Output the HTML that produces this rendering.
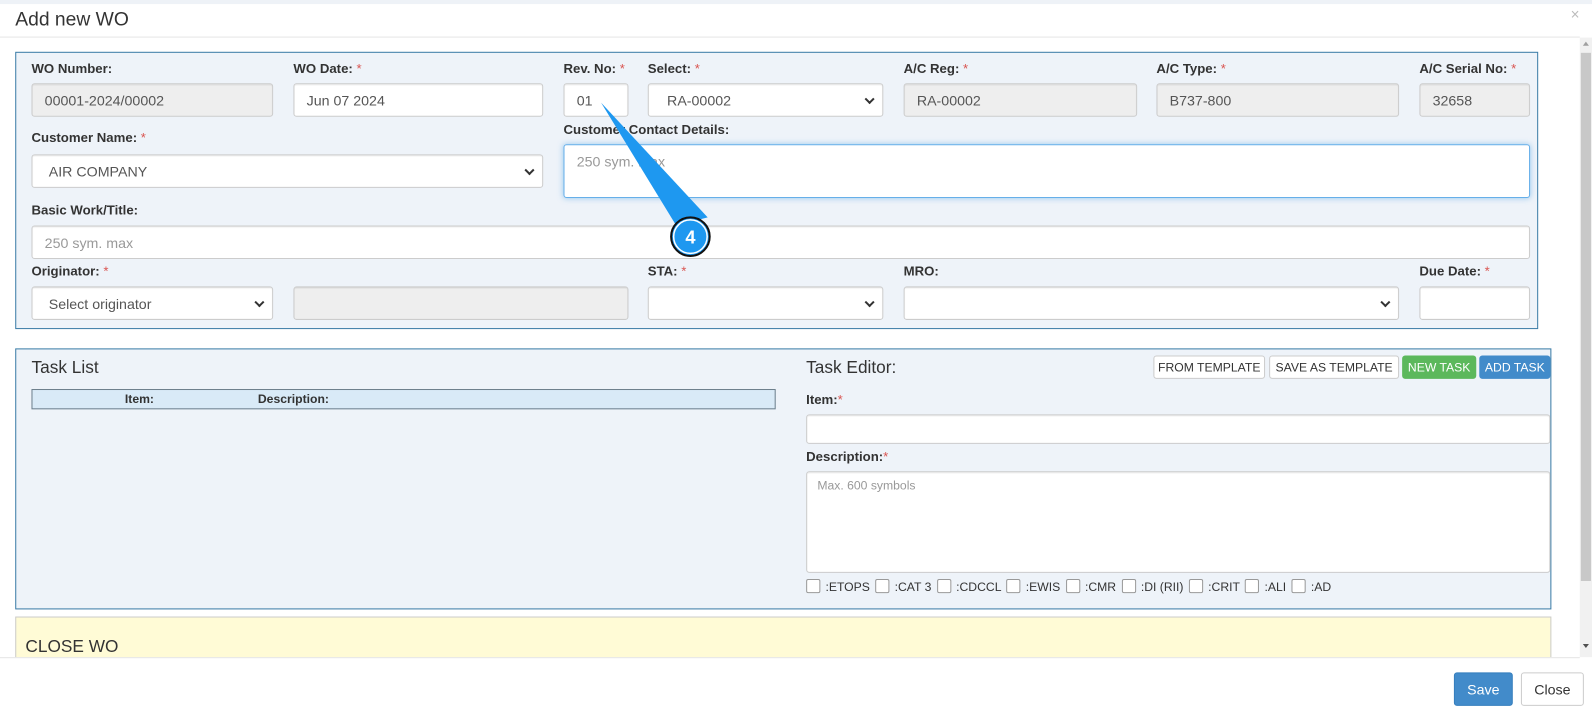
<!DOCTYPE html>
<html><head><meta charset="utf-8">
<style>
html,body{margin:0;padding:0;width:1592px;height:713px;overflow:hidden;background:#fff;font-family:"Liberation Sans",Arial,sans-serif;color:#333}
#w{position:absolute;left:0;top:0;width:1568px;height:702px;transform-origin:0 0;transform:scale(1.0153,1.0157)}
.a{position:absolute;box-sizing:border-box}
.lb{position:absolute;font-size:13px;font-weight:bold;color:#333;white-space:nowrap}
.lb i{color:#d9534f;font-style:normal;font-weight:normal}
.in{position:absolute;box-sizing:border-box;background:#fff;border:1px solid #ccc;border-radius:3px;font-size:14px;color:#555;padding:0 12px;display:flex;align-items:center;box-shadow:inset 0 1px 1px rgba(0,0,0,.075)}
.g{background:#eee}
.sel::after{content:"";position:absolute;right:9px;top:50%;width:5px;height:5px;border-right:2px solid #333;border-bottom:2px solid #333;transform:translateY(-70%) rotate(45deg)}
.sel{padding-left:16px}
.ph{color:#999}
.panel{position:absolute;box-sizing:border-box;background:#eef3f9;border:1px solid #3b7ca7}
.btn{position:absolute;box-sizing:border-box;font-size:12px;border-radius:3px;display:flex;align-items:center;justify-content:center;white-space:nowrap}
.cb{display:inline-block;width:12px;height:12px;border:1px solid #999;background:#fff;border-radius:2px;vertical-align:-2px;margin:0 5px 0 2px}
</style></head><body><div id="w">
<div class="a" style="left:0;top:0;width:1568px;height:4px;background:#eef2f7"></div>
<div class="a" style="left:15px;top:9px;font-size:19px;color:#333">Add new WO</div>
<div class="a" style="left:1547px;top:6px;font-size:15px;color:#bbb">×</div>
<div class="a" style="left:0;top:36px;width:1556px;height:1px;background:#e5e5e5"></div>
<div class="a" style="left:1556px;top:37px;width:12px;height:610px;background:#f1f1f1"></div>
<div class="a" style="left:1557px;top:52px;width:10px;height:520px;background:#c8c8c8"></div>
<div class="a" style="left:1559px;top:41px;border-left:3px solid transparent;border-right:3px solid transparent;border-bottom:4px solid #a0a0a0"></div>
<div class="a" style="left:1559px;top:634px;border-left:3px solid transparent;border-right:3px solid transparent;border-top:4px solid #505050"></div>

<div class="panel" style="left:15px;top:51px;width:1500px;height:273px"></div>
<div class="lb" style="left:31px;top:60px">WO Number:</div>
<div class="in g" style="left:31px;top:82px;width:238px;height:33px">00001-2024/00002</div>
<div class="lb" style="left:289px;top:60px">WO Date: <i>*</i></div>
<div class="in" style="left:289px;top:82px;width:246px;height:33px">Jun 07 2024</div>
<div class="lb" style="left:555px;top:60px">Rev. No: <i>*</i></div>
<div class="in" style="left:555px;top:82px;width:64px;height:33px">01</div>
<div class="lb" style="left:638px;top:60px">Select: <i>*</i></div>
<div class="in sel" style="left:638px;top:82px;width:232px;height:33px;padding-left:18px">RA-00002</div>
<div class="lb" style="left:890px;top:60px">A/C Reg: <i>*</i></div>
<div class="in g" style="left:890px;top:82px;width:230px;height:33px">RA-00002</div>
<div class="lb" style="left:1139px;top:60px">A/C Type: <i>*</i></div>
<div class="in g" style="left:1139px;top:82px;width:239px;height:33px">B737-800</div>
<div class="lb" style="left:1398px;top:60px">A/C Serial No: <i>*</i></div>
<div class="in g" style="left:1398px;top:82px;width:109px;height:33px">32658</div>

<div class="lb" style="left:31px;top:128px">Customer Name: <i>*</i></div>
<div class="in sel" style="left:31px;top:152px;width:504px;height:33px">AIR COMPANY</div>
<div class="lb" style="left:555px;top:120px">Customer Contact Details:</div>
<div class="in ph" style="left:555px;top:142px;width:952px;height:53px;align-items:flex-start;padding-top:8px;border-color:#66afe9;box-shadow:0 0 6px rgba(102,175,233,.6)">250 sym. max</div>
<div class="lb" style="left:31px;top:199px">Basic Work/Title:</div>
<div class="in ph" style="left:31px;top:222px;width:1476px;height:33px">250 sym. max</div>

<div class="lb" style="left:31px;top:259px">Originator: <i>*</i></div>
<div class="in sel" style="left:31px;top:282px;width:238px;height:33px">Select originator</div>
<div class="in g" style="left:289px;top:282px;width:330px;height:33px"></div>
<div class="lb" style="left:638px;top:259px">STA: <i>*</i></div>
<div class="in sel" style="left:638px;top:282px;width:232px;height:33px"></div>
<div class="lb" style="left:890px;top:259px">MRO:</div>
<div class="in sel" style="left:890px;top:282px;width:488px;height:33px"></div>
<div class="lb" style="left:1398px;top:259px">Due Date: <i>*</i></div>
<div class="in" style="left:1398px;top:282px;width:109px;height:33px"></div>

<div class="panel" style="left:15px;top:343px;width:1513px;height:257px"></div>
<div class="a" style="left:31px;top:352px;font-size:17px;color:#333">Task List</div>
<div class="a" style="left:31px;top:383px;width:733px;height:20px;background:#d9eaf7;border:1px solid #6d7f8c;font-size:12px;font-weight:bold"><span style="position:absolute;left:91px;top:2px">Item:</span><span style="position:absolute;left:222px;top:2px">Description:</span></div>
<div class="a" style="left:794px;top:352px;font-size:17px;color:#333">Task Editor:</div>
<div class="btn" style="left:1136px;top:350px;width:110px;height:23px;background:#fff;border:1px solid #ccc;color:#333">FROM TEMPLATE</div>
<div class="btn" style="left:1250px;top:350px;width:128px;height:23px;background:#fff;border:1px solid #ccc;color:#333">SAVE AS TEMPLATE</div>
<div class="btn" style="left:1381px;top:350px;width:73px;height:23px;background:#5cb85c;color:#fff">NEW TASK</div>
<div class="btn" style="left:1457px;top:350px;width:70px;height:23px;background:#428bca;color:#fff">ADD TASK</div>
<div class="lb" style="left:794px;top:386px">Item:<i>*</i></div>
<div class="in" style="left:794px;top:408px;width:733px;height:29px"></div>
<div class="lb" style="left:794px;top:442px">Description:<i>*</i></div>
<div class="in ph" style="left:794px;top:464px;width:733px;height:100px;align-items:flex-start;padding:6px 10px;font-size:12px">Max. 600 symbols</div>
<div class="a" style="left:792px;top:570px;font-size:12px;color:#333;white-space:nowrap"><span class="cb"></span>:ETOPS <span class="cb"></span>:CAT 3 <span class="cb"></span>:CDCCL <span class="cb"></span>:EWIS <span class="cb"></span>:CMR <span class="cb"></span>:DI (RII) <span class="cb"></span>:CRIT <span class="cb"></span>:ALI <span class="cb"></span>:AD</div>

<div class="a" style="left:15px;top:607px;width:1513px;height:45px;background:#fffbd6;border:1px solid #ccc"></div>
<div class="a" style="left:25px;top:627px;font-size:17px;color:#333">CLOSE WO</div>
<div class="a" style="left:0;top:647px;width:1556px;height:55px;background:#fff;border-top:1px solid #e5e5e5"></div>
<div class="btn" style="left:1432px;top:662px;width:58px;height:33px;background:#428bca;color:#fff;font-size:14px;border:1px solid #357ebd">Save</div>
<div class="btn" style="left:1498px;top:662px;width:62px;height:33px;background:#fff;color:#333;font-size:14px;border:1px solid #ccc">Close</div>

<svg class="a" style="left:0;top:0" width="1568" height="702">
<path d="M592 101 L666 222 L697 214 Z" fill="#1e98f0"/>
<circle cx="680" cy="233" r="19" fill="#1e98f0" stroke="#111" stroke-width="2"/>
<circle cx="680" cy="233" r="16.5" fill="none" stroke="#fff" stroke-width="1.5"/>
<text x="680" y="239.5" text-anchor="middle" font-family="Liberation Sans" font-weight="bold" font-size="18" fill="#fff">4</text>
</svg>
</div></body></html>
